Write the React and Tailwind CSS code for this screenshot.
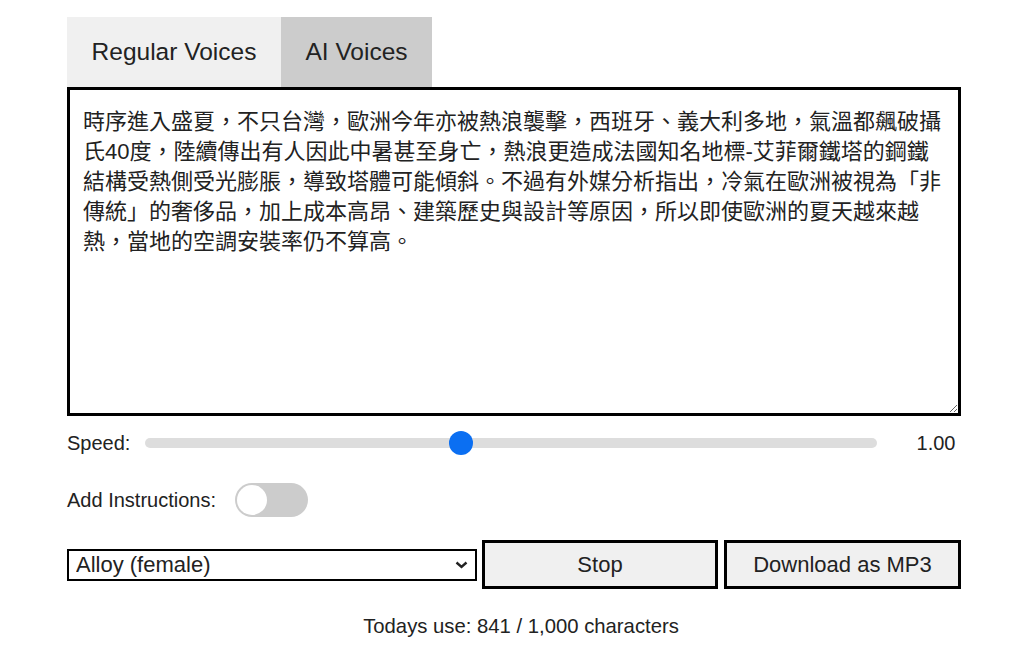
import React, { useState } from 'react';

const text =
  '時序進入盛夏，不只台灣，歐洲今年亦被熱浪襲擊，西班牙、義大利多地，氣溫都飆破攝氏40度，陸續傳出有人因此中暑甚至身亡，熱浪更造成法國知名地標-艾菲爾鐵塔的鋼鐵結構受熱側受光膨脹，導致塔體可能傾斜。不過有外媒分析指出，冷氣在歐洲被視為「非傳統」的奢侈品，加上成本高昂、建築歷史與設計等原因，所以即使歐洲的夏天越來越熱，當地的空調安裝率仍不算高。';

const App = () => {
  const [tab, setTab] = useState('ai');
  const [content, setContent] = useState(text);
  const [speed, setSpeed] = useState(1);
  const [instructions, setInstructions] = useState(false);
  const [voice, setVoice] = useState('alloy');

  return (
    <div className="min-h-screen bg-white text-[#222] font-['Liberation_Sans','Noto_Sans_CJK_TC',sans-serif]">
      <div className="ml-[67px] w-[894px] pt-[17px]">
        {/* tabs */}
        <div className="flex">
          <button
            onClick={() => setTab('regular')}
            className={`h-[70px] w-[214px] text-[24.5px] ${tab === 'regular' ? 'bg-[#cccccc]' : 'bg-[#f0f0f0]'}`}
          >
            Regular Voices
          </button>
          <button
            onClick={() => setTab('ai')}
            className={`h-[70px] w-[151px] text-[24.5px] ${tab === 'ai' ? 'bg-[#cccccc]' : 'bg-[#f0f0f0]'}`}
          >
            AI Voices
          </button>
        </div>

        <textarea
          value={content}
          onChange={(e) => setContent(e.target.value)}
          className="block w-full h-[329px] border-[3px] border-black px-[13px] pt-[17px] text-[22px] leading-[30px] outline-none"
        />

        {/* speed */}
        <div className="flex items-center h-[24px] mt-[15px] text-[20px]">
          <span>Speed:</span>
          <input
            type="range"
            min="0.25"
            max="2"
            step="0.05"
            value={speed}
            onChange={(e) => setSpeed(parseFloat(e.target.value))}
            className="flex-1 ml-[15px] mr-[34px] h-[10px] appearance-none rounded-full bg-[#dddddd] outline-none [&::-webkit-slider-thumb]:appearance-none [&::-webkit-slider-thumb]:w-[24px] [&::-webkit-slider-thumb]:h-[24px] [&::-webkit-slider-thumb]:rounded-full [&::-webkit-slider-thumb]:bg-[#0b6ff2]"
          />
          <span className="w-[50px] text-center">{speed.toFixed(2)}</span>
        </div>

        {/* instructions toggle */}
        <div className="flex items-center h-[34px] mt-[28px] text-[20px]">
          <span>Add Instructions:</span>
          <button
            onClick={() => setInstructions(!instructions)}
            className={`ml-[19px] w-[73px] h-[34px] rounded-full p-[2px] flex items-center ${instructions ? 'bg-[#0b6ff2] justify-end' : 'bg-[#cccccc] justify-start'}`}
          >
            <span className="w-[30px] h-[30px] rounded-full bg-white" />
          </button>
        </div>

        {/* actions */}
        <div className="flex items-center gap-[5px] mt-[23px]">
          <div className="relative w-[410px]">
            <select
              value={voice}
              onChange={(e) => setVoice(e.target.value)}
              className="block w-full h-[32px] appearance-none border-2 border-black bg-white pl-[7px] text-[22px] leading-[26px] outline-none"
            >
              <option value="alloy">Alloy (female)</option>
              <option value="echo">Echo (male)</option>
              <option value="fable">Fable (male)</option>
              <option value="nova">Nova (female)</option>
            </select>
            <svg className="absolute right-[9px] top-[12px] w-[13px] h-[8px] pointer-events-none" viewBox="0 0 13 8">
              <path d="M1.5 1.5 L6.5 6 L11.5 1.5" fill="none" stroke="#222" strokeWidth="2.4" />
            </svg>
          </div>
          <button className="w-[236px] h-[49px] border-[3px] border-black bg-[#f0f0f0] text-[22px]">Stop</button>
          <button className="flex-1 ml-[1px] h-[49px] border-[3px] border-black bg-[#f0f0f0] text-[22px]">Download as MP3</button>
        </div>

        <p className="mt-[26px] pl-[14px] text-center text-[20.3px] leading-[23px]">Todays use: 841 / 1,000 characters</p>
      </div>
    </div>
  );
};

export default App;
